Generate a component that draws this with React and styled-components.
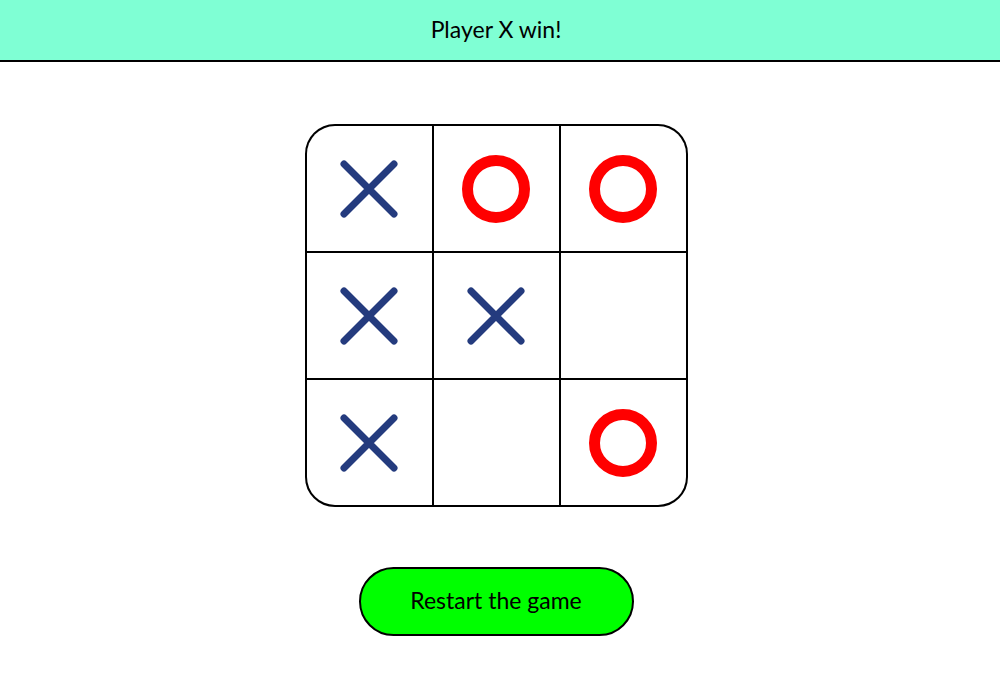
import styled, { createGlobalStyle } from "styled-components";

const GlobalStyle = createGlobalStyle`
    html, body {
        margin: 0;
        padding: 0;
        background: #ffffff;
        font-family: "Gill Sans", "Lato", "Liberation Sans", sans-serif;
    }
`;

const Header = styled.header`
    height: 60px;
    box-sizing: border-box;
    background-color: #7fffd4;
    border-bottom: 2px solid #000;
    display: flex;
    align-items: center;
    justify-content: center;
    padding: 0 8px 3px 0;
    height: 62px;
    font-size: 23px;
    color: #000;
`;

const Main = styled.main`
    display: flex;
    flex-direction: column;
    align-items: center;
    padding: 62px 8px 0 0;
    gap: 61px;
`;

const Board = styled.div`
    display: grid;
    grid-template-columns: repeat(3, 125px);
    grid-template-rows: repeat(3, 125px);
    gap: 2px;
    background-color: #000;
    border: 2px solid #000;
    border-radius: 30px;
    overflow: hidden;
`;

const Cell = styled.div`
    background-color: #fff;
    display: flex;
    align-items: center;
    justify-content: center;
`;

const RestartButton = styled.button`
    width: 275px;
    height: 69px;
    margin-top: -1px;
    padding: 0 0 3px;
    border: 2px solid #000;
    border-radius: 35px;
    background-color: #00ff00;
    font-family: inherit;
    font-size: 23px;
    color: #000;
    cursor: pointer;
`;

const XMark = () => (
    <svg width="62" height="62" viewBox="0 0 62 62">
        <path d="M6 6 L56 56 M56 6 L6 56" stroke="#243b7e" strokeWidth="7" strokeLinecap="round" />
    </svg>
);

const OMark = () => (
    <svg width="70" height="70" viewBox="0 0 70 70">
        <circle cx="35" cy="35" r="28.5" fill="none" stroke="#ff0000" strokeWidth="11" />
    </svg>
);

const board = ["X", "O", "O", "X", "X", "", "X", "", "O"];

export default function App() {
    return (
        <>
            <GlobalStyle />
            <Header>Player X win!</Header>
            <Main>
                <Board>
                    {board.map((v, i) => (
                        <Cell key={i}>
                            {v === "X" && <XMark />}
                            {v === "O" && <OMark />}
                        </Cell>
                    ))}
                </Board>
                <RestartButton>Restart the game</RestartButton>
            </Main>
        </>
    );
}
